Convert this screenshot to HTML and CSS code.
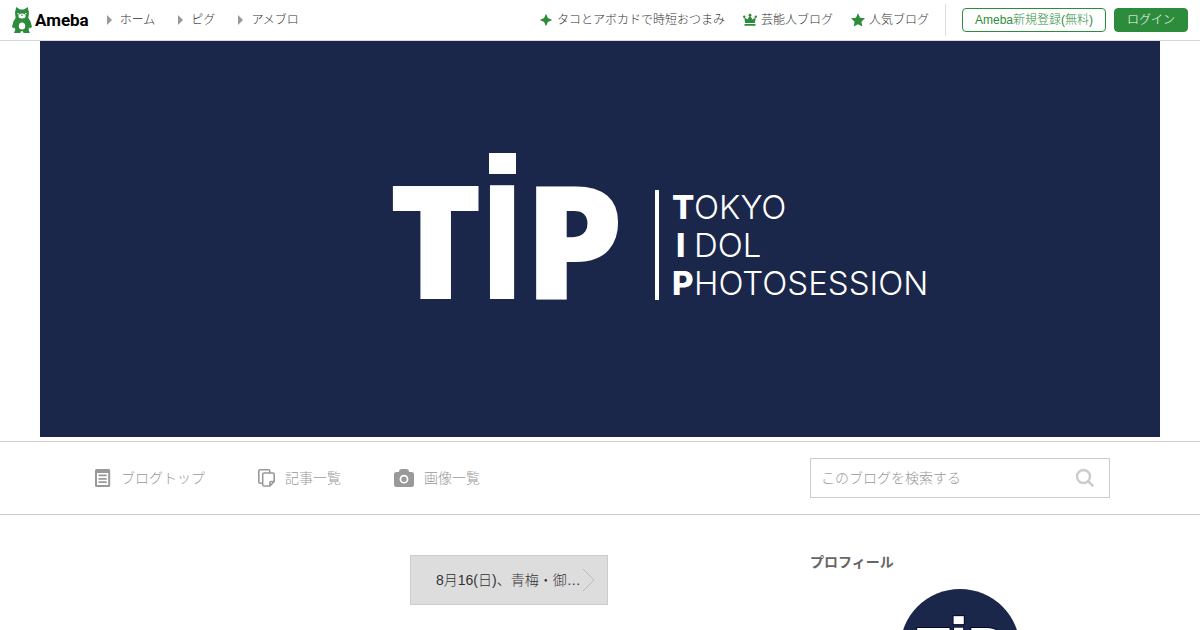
FILE: index.html
```
<!DOCTYPE html>
<html lang="ja">
<head>
<meta charset="UTF-8">
<title>TOKYO IDOL PHOTOSESSION</title>
<meta name="viewport" content="width=device-width, initial-scale=1.0">
<link rel="stylesheet" href="styles.css">
</head>
<body>

<header class="ameba-bar">
    <a class="logo" href="#" aria-label="Ameba">
        <svg class="logo-mark" viewBox="0 0 20 26" aria-hidden="true">
            <path fill="#2d8c3c" d="M4.200 0 8 2.600h4L15.600 0 17 5.500 16.400 11l2.200 3.500 1.400 5.500-2.300 1.600-.7-1.300-.3 2.700 1.200 3h-6.400l-.6-1.800h-2L8.300 26H2l1.200-3-.3-2.700-.7 1.300L0 20l1.400-5.500L3.600 11 3 5.500z"/>
            <ellipse cx="10" cy="9" rx="3.600" ry="2.500" fill="#fff"/>
            <path fill="#2d8c3c" d="M8.800 7.800h2.400L10 9.200z"/>
            <circle cx="6.200" cy="6.800" r=".8" fill="#fff"/>
            <circle cx="13.800" cy="6.800" r=".8" fill="#fff"/>
            <ellipse cx="10" cy="19" rx="3.200" ry="3.600" fill="#fff"/>
        </svg>
        <span class="logo-text">Ameba</span>
    </a>
    <nav class="service-nav">
        <a href="#">ホーム</a>
        <a href="#">ピグ</a>
        <a href="#">アメブロ</a>
    </nav>
    <nav class="topic-nav">
        <a href="#">
            <svg viewBox="0 0 14 14" aria-hidden="true"><path d="M7 .8 8.900 5.100 13.200 7 8.900 8.900 7 13.200 5.100 8.900.8 7l4.300-1.900z"/></svg>
            タコとアボカドで時短おつまみ
        </a>
        <a href="#">
            <svg viewBox="0 0 14 14" aria-hidden="true"><path d="M1.300 4.200 4.500 6.500 6.400 3.300h1.200l1.900 3.200 3.200-2.300-.8 5.800H2.100zM1.500 11h11v1.800h-11z"/><circle cx="7" cy="2.200" r="1.400"/><circle cx="1.200" cy="3.700" r="1.200"/><circle cx="12.800" cy="3.700" r="1.200"/></svg>
            芸能人ブログ
        </a>
        <a href="#">
            <svg viewBox="0 0 14 14" aria-hidden="true"><path d="m7 .2 2.100 4.500 4.900.6-3.600 3.400.9 4.900L7 11.200l-4.300 2.400.9-4.900L0 5.300l4.900-.6z"/></svg>
            人気ブログ
        </a>
    </nav>
    <div class="account">
        <button type="button" class="btn">Ameba新規登録(無料)</button>
        <button type="button" class="btn btn-fill">ログイン</button>
    </div>
</header>

<a class="banner" href="#">
    <svg viewBox="0 0 1120 396" role="img" aria-label="TiP TOKYO IDOL PHOTOSESSION">
        <defs>
            <clipPath id="stem">
                <rect x="430" y="140" width="64" height="124"/>
            </clipPath>
            <g id="tip">
                <text class="tip-cap" x="349" y="258">T</text>
                <g clip-path="url(#stem)">
                    <text class="tip-i" x="462" y="258">i</text>
                </g>
                <rect x="449" y="112" width="27" height="21"/>
                <text class="tip-cap" x="484" y="258">P</text>
            </g>
        </defs>
        <use href="#tip"/>
        <rect x="615" y="149" width="4" height="110"/>
        <g class="tip-name">
            <text x="632" y="178"><tspan class="initial">T</tspan></text>
            <text x="654" y="178">OKYO</text>
            <text x="636" y="216"><tspan class="initial">I</tspan></text>
            <text x="654" y="216">DOL</text>
            <text x="632" y="254"><tspan class="initial">P</tspan></text>
            <text x="654" y="254">HOTOSESSION</text>
        </g>
    </svg>
</a>

<div class="blog-nav">
    <div class="inner">
        <nav class="blog-menu">
            <a href="#">
                <svg viewBox="0 0 16 20" aria-hidden="true"><path fill-rule="evenodd" d="M1.500 1h12.200a1.500 1.500 0 0 1 1.500 1.500v15a1.500 1.500 0 0 1-1.500 1.500H1.500A1.500 1.500 0 0 1 0 17.500v-15A1.500 1.500 0 0 1 1.500 1zM2 5v12h11.200V5zM3.500 6.500h8.200v1.800H3.500zm0 3.400h8.200v1.800H3.500zm0 3.400h8.200v1.800H3.500z"/></svg>
                ブログトップ
            </a>
            <a href="#">
                <svg viewBox="0 0 17 20" aria-hidden="true"><path fill="none" stroke="currentColor" stroke-width="1.600" stroke-linejoin="round" d="M4.300 15.200H2.100A1.300 1.300 0 0 1 .8 13.900V3.100a1.300 1.300 0 0 1 1.300-1.300h8.400A1.300 1.300 0 0 1 11.800 3.100v1.200M6 5h8.900a1.300 1.300 0 0 1 1.300 1.300v7.200L11.900 18H6a1.300 1.300 0 0 1-1.300-1.300V6.300A1.300 1.300 0 0 1 6 5zm5.900 13v-3.200a1.300 1.300 0 0 1 1.300-1.300h3"/></svg>
                記事一覧
            </a>
            <a href="#">
                <svg viewBox="0 0 20 20" aria-hidden="true"><path fill-rule="evenodd" d="M8 1h4a3 3 0 0 1 3 3h2.500A2.500 2.500 0 0 1 20 6.500v10a2.500 2.500 0 0 1-2.500 2.500h-15A2.500 2.500 0 0 1 0 16.500v-10A2.500 2.500 0 0 1 2.500 4H5a3 3 0 0 1 3-3zm2 5.800a4.400 4.400 0 1 0 0 8.800 4.400 4.400 0 0 0 0-8.800zm0 1.700a2.700 2.700 0 1 1 0 5.400 2.700 2.700 0 0 1 0-5.400z"/></svg>
                画像一覧
            </a>
        </nav>
        <form class="search" role="search">
            <input type="search" placeholder="このブログを検索する" aria-label="このブログを検索する">
            <button type="button" aria-label="検索">
                <svg viewBox="0 0 20 20" aria-hidden="true"><circle cx="8.500" cy="8.500" r="6.500"/><path d="m13 13 5.300 5.300"/></svg>
            </button>
        </form>
    </div>
</div>

<div class="inner content">
    <main>
        <a class="pager-next" href="#">
            <span>8月16(日)、青梅・御岳渓谷撮影会</span>
            <svg viewBox="0 0 12 24" aria-hidden="true"><path d="m0 1 11 11L0 23"/></svg>
        </a>
    </main>
    <aside>
        <h2>プロフィール</h2>
        <a class="avatar" href="#" aria-label="プロフィール画像">
            <svg viewBox="307 40 318 318" aria-hidden="true"><use href="#tip"/></svg>
        </a>
    </aside>
</div>

</body>
</html>
```
FILE: styles.css
```
* {
    box-sizing: border-box;
}

body {
    margin: 0;
    font-family: "Liberation Sans", "Noto Sans CJK JP", sans-serif;
    font-size: 14px;
    font-weight: 300;
    line-height: 20px;
    color: #333;
    background: #fff;
}

a {
    color: inherit;
    text-decoration: none;
}

svg {
    display: block;
    fill: currentColor;
}

/* 共通ヘッダー */
.ameba-bar {
    display: flex;
    align-items: center;
    height: 41px;
    padding: 0 12px;
    border-bottom: 1px solid #d8d8dc;
    font-size: 12px;
    white-space: nowrap;
}

.logo {
    display: flex;
    align-items: center;
    gap: 3px;
    color: #000;
}

.logo-mark {
    width: 20px;
    height: 26px;
}

.logo-text {
    font: bold 17px/26px Roboto, sans-serif;
}

.service-nav {
    display: flex;
    gap: 23px;
    margin-left: 18px;
}

.service-nav a {
    display: flex;
    align-items: center;
    gap: 8px;
}

.service-nav a::before {
    content: "";
    border: solid transparent;
    border-width: 5px 0 5px 5px;
    border-left-color: #999;
}

.topic-nav {
    display: flex;
    gap: 18px;
    margin-left: auto;
}

.topic-nav a {
    display: flex;
    align-items: center;
    gap: 4px;
}

.topic-nav svg {
    width: 14px;
    height: 14px;
    color: #2d8c3c;
}

.account {
    display: flex;
    align-items: center;
    gap: 8px;
    height: 32px;
    margin-left: 16px;
    padding-left: 16px;
    border-left: 1px solid #ddd;
}

.btn {
    height: 24px;
    padding: 0 12px;
    border: 1px solid #2d8c3c;
    border-radius: 4px;
    background: #fff;
    color: #2d8c3c;
    font: inherit;
}

.btn-fill {
    background: #2d8c3c;
    color: #fff;
}

/* ブログヘッダー画像 */
.banner {
    display: block;
    max-width: 1120px;
    margin: 0 auto 4px;
    background: #1b264b;
    color: #fff;
}

.tip-cap {
    font: 800 158px "Open Sans", sans-serif;
}

.tip-i {
    font: 600 210px "Open Sans", sans-serif;
    text-anchor: middle;
}

.tip-name {
    font: 300 33px Inter, sans-serif;
}

.initial {
    font-weight: 800;
}

/* ブログメニュー */
.blog-nav {
    border: solid #ccc;
    border-width: 1px 0;
    padding: 16px 0;
}

.inner {
    display: flex;
    justify-content: space-between;
    max-width: 1020px;
    margin: 0 auto;
}

.blog-menu {
    display: flex;
    align-items: center;
    gap: 53px;
    padding-left: 5px;
    color: #999;
}

.blog-menu a {
    display: flex;
    align-items: center;
    gap: 10px;
}

.blog-menu svg {
    height: 20px;
}

.search {
    display: flex;
    align-items: center;
    width: 300px;
    height: 40px;
    border: 1px solid #ccc;
}

.search input {
    flex: 1;
    min-width: 0;
    padding: 0 10px;
    border: 0;
    background: none;
    font: inherit;
}

.search input::placeholder {
    color: #999;
}

.search button {
    padding: 0;
    margin-right: 14px;
    border: 0;
    background: none;
}

.search svg {
    width: 20px;
    height: 20px;
    fill: none;
    stroke: #ccc;
    stroke-width: 2.5;
}

/* 本文 */
.content {
    gap: 40px;
    padding-top: 40px;
}

main {
    flex: 1;
    padding-left: 320px;
}

.pager-next {
    display: flex;
    align-items: center;
    width: 198px;
    height: 50px;
    padding: 0 12px 0 25px;
    border: 1px solid #ccc;
    background: #ddd;
}

.pager-next span {
    flex: 1;
    overflow: hidden;
    text-overflow: ellipsis;
    white-space: nowrap;
}

.pager-next svg {
    width: 12px;
    height: 24px;
    fill: none;
    stroke: #bbb;
}

aside {
    width: 300px;
}

aside h2 {
    margin: 0 0 20px;
    font-size: 14px;
    line-height: 14px;
    color: #666;
}

.avatar {
    display: block;
    width: 120px;
    margin: 0 auto;
    border-radius: 50%;
    overflow: hidden;
    background: #1b264b;
    color: #fff;
}

.avatar svg {
    stroke: #060a24;
    stroke-width: 5;
    paint-order: stroke;
}
```
